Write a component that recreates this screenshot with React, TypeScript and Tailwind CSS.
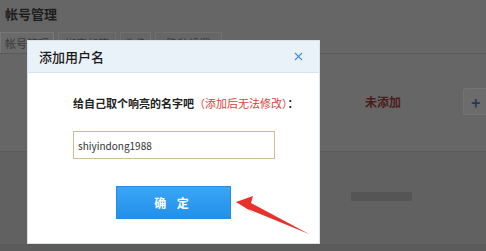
import { X } from 'lucide-react'

const font = { fontFamily: '"Noto Sans CJK SC", "Liberation Sans", sans-serif' }

function Fondo() {
  return (
    <div className="flex h-full flex-col">
      <div className="h-[32px] pl-[5px] pt-[5px] text-[13px] font-bold leading-[18px] text-[#1e1e1e]">
        帐号管理
      </div>
      <div className="flex h-[22px] items-end gap-[4px] border-b border-[#5a5a5a] text-[11px] text-[#3a3a3a]">
        <div className="flex h-[21px] w-[54px] items-center justify-center border border-b-0 border-[#777] bg-[#6a6a6a]">
          帐号管理
        </div>
        <div className="flex h-[21px] w-[58px] items-center justify-center border border-b-0 border-[#707070]">
          绑定邮箱
        </div>
        <div className="flex h-[21px] w-[31px] items-center justify-center border border-b-0 border-[#707070]">
          头像
        </div>
        <div className="flex h-[21px] w-[67px] items-center justify-center border border-b-0 border-[#707070]">
          隐私设置
        </div>
      </div>
      <div className="flex h-[98px] items-center border-b border-[#5a5a5a] pb-[2px]">
        <div className="ml-[365px] text-[12px] font-bold text-[#4a1d1d]">未添加</div>
        <div className="ml-auto flex h-[27px] w-[23px] items-center rounded-l-[3px] border border-r-0 border-[#747474] bg-[#6c6c6c] pl-[7px] text-[16px] font-bold leading-none text-[#283a55]">
          +
        </div>
      </div>
      <div className="flex h-[92px] items-center bg-[#616161] pb-[3px]">
        <div className="ml-[351px] h-[9px] w-[61px] bg-[#555]" />
      </div>
      <div className="flex-1 border-t border-[#595959] bg-[#5b5b5b]" />
    </div>
  )
}

function Flecha() {
  return (
    <svg className="pointer-events-none absolute left-0 top-0" width="486" height="251" viewBox="0 0 486 251">
      <polygon
        points="236,202 253,196 251,203 309,234 248,209 257,215"
        fill="#e8312b"
      />
    </svg>
  )
}

export default function App() {
  return (
    <div className="relative h-[251px] w-[486px] overflow-hidden bg-[#666]" style={font}>
      <Fondo />
      <div className="absolute left-[27px] top-[40px] flex h-[204px] w-[293px] flex-col border border-[#d8e2ea] bg-white">
        <div className="flex h-[32px] shrink-0 items-center justify-between border-b border-[#d6e3ee] bg-[#eaf2f9] pl-[11px] pr-[14px]">
          <span className="text-[13px] font-medium text-[#1a1a1a]">添加用户名</span>
          <X size={13} strokeWidth={2} className="text-[#3d8fd4]" />
        </div>
        <div className="flex flex-col pl-[45px]">
          <p className="mt-[22px] text-[11px] font-bold leading-[16px] text-[#222]">
            给自己取个响亮的名字吧
            <span className="font-normal text-[#d9403b]">（添加后无法修改）</span>
            ：
          </p>
          <div className="mt-[20px] flex h-[28px] w-[202px] items-center border border-[#cbbd91] pl-[4px] text-[10px] text-[#333]">
            shiyindong1988
          </div>
          <button className="ml-[43px] mt-[27px] flex h-[33px] w-[115px] items-center justify-center border border-[#2a8ae0] bg-gradient-to-b from-[#3aa6f5] to-[#2190ea] text-[12px] font-bold tracking-[4px] text-white">
            确 定
          </button>
        </div>
      </div>
      <Flecha />
    </div>
  )
}
